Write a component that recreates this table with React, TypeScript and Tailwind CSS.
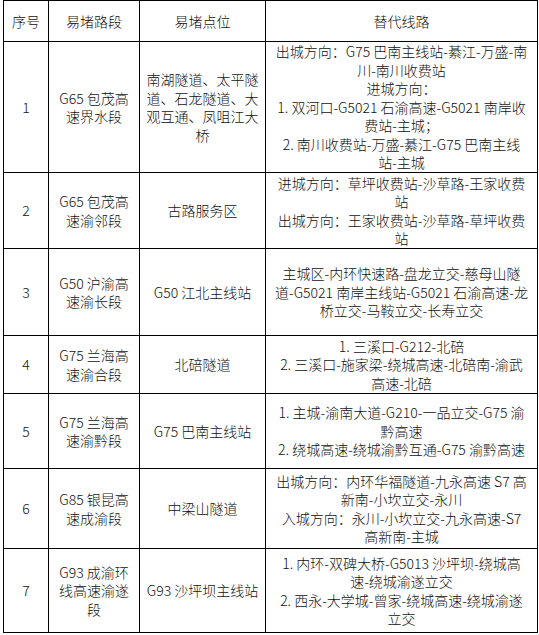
import React from "react";

type Row = { no: string; road: string[]; point: string[]; route: string[]; h: number };

const rows: Row[] = [
  {
    no: "1",
    road: ["G65 包茂高", "速界水段"],
    point: ["南湖隧道、太平隧", "道、石龙隧道、大", "观互通、凤咀江大", "桥"],
    route: [
      "出城方向：G75 巴南主线站-綦江-万盛-南",
      "川-南川收费站",
      "进城方向：",
      "1. 双河口-G5021 石渝高速-G5021 南岸收",
      "费站-主城；",
      "2. 南川收费站-万盛-綦江-G75 巴南主线",
      "站-主城",
    ],
    h: 131,
  },
  {
    no: "2",
    road: ["G65 包茂高", "速渝邻段"],
    point: ["古路服务区"],
    route: ["进城方向：草坪收费站-沙草路-王家收费", "站", "出城方向：王家收费站-沙草路-草坪收费", "站"],
    h: 76,
  },
  {
    no: "3",
    road: ["G50 沪渝高", "速渝长段"],
    point: ["G50 江北主线站"],
    route: ["主城区-内环快速路-盘龙立交-慈母山隧", "道-G5021 南岸主线站-G5021 石渝高速-龙", "桥立交-马鞍立交-长寿立交"],
    h: 87,
  },
  {
    no: "4",
    road: ["G75 兰海高", "速渝合段"],
    point: ["北碚隧道"],
    route: ["1. 三溪口-G212-北碚", "2. 三溪口-施家梁-绕城高速-北碚南-渝武", "高速-北碚"],
    h: 58,
  },
  {
    no: "5",
    road: ["G75 兰海高", "速渝黔段"],
    point: ["G75 巴南主线站"],
    route: ["1. 主城-渝南大道-G210-一品立交-G75 渝", "黔高速", "2. 绕城高速-绕城渝黔互通-G75 渝黔高速"],
    h: 75,
  },
  {
    no: "6",
    road: ["G85 银昆高", "速成渝段"],
    point: ["中梁山隧道"],
    route: ["出城方向：内环华福隧道-九永高速 S7 高", "新南-小坎立交-永川", "入城方向：永川-小坎立交-九永高速-S7", "高新南-主城"],
    h: 80,
  },
  {
    no: "7",
    road: ["G93 成渝环", "线高速渝遂", "段"],
    point: ["G93 沙坪坝主线站"],
    route: ["1. 内环-双碑大桥-G5013 沙坪坝-绕城高", "速-绕城渝遂立交", "2. 西永-大学城-曾家-绕城高速-绕城渝遂", "立交"],
    h: 84,
  },
];

function Lines({ lines }: { lines: string[] }) {
  return (
    <div className="flex flex-col items-center">
      {lines.map((l, i) => (
        <div key={i} className="whitespace-nowrap">
          {l}
        </div>
      ))}
    </div>
  );
}

export default function App() {
  return (
    <div
      className="w-[539px] h-[635px] bg-white text-[#111] text-[14px] leading-[18.5px] font-light"
      style={{ fontFamily: '"Noto Sans CJK SC", "Noto Sans", sans-serif' }}
    >
      <table className="ml-[3px] w-[534px] table-fixed border-collapse">
        <colgroup>
          <col className="w-[45px]" />
          <col className="w-[91px]" />
          <col className="w-[126px]" />
          <col className="w-[272px]" />
        </colgroup>
        <thead>
          <tr className="h-[41px]">
            <th className="border border-black font-light text-center align-middle p-0">序号</th>
            <th className="border border-black font-light text-center align-middle p-0">易堵路段</th>
            <th className="border border-black font-light text-center align-middle p-0">易堵点位</th>
            <th className="border border-black font-light text-center align-middle p-0">替代线路</th>
          </tr>
        </thead>
        <tbody>
          {rows.map((r) => (
            <tr key={r.no} style={{ height: r.h }}>
              <td className="border border-black text-center align-middle p-0">{r.no}</td>
              <td className="border border-black text-center align-middle p-0">
                <Lines lines={r.road} />
              </td>
              <td className="border border-black text-center align-middle p-0">
                <Lines lines={r.point} />
              </td>
              <td className="border border-black text-center align-middle p-0">
                <Lines lines={r.route} />
              </td>
            </tr>
          ))}
        </tbody>
      </table>
    </div>
  );
}
